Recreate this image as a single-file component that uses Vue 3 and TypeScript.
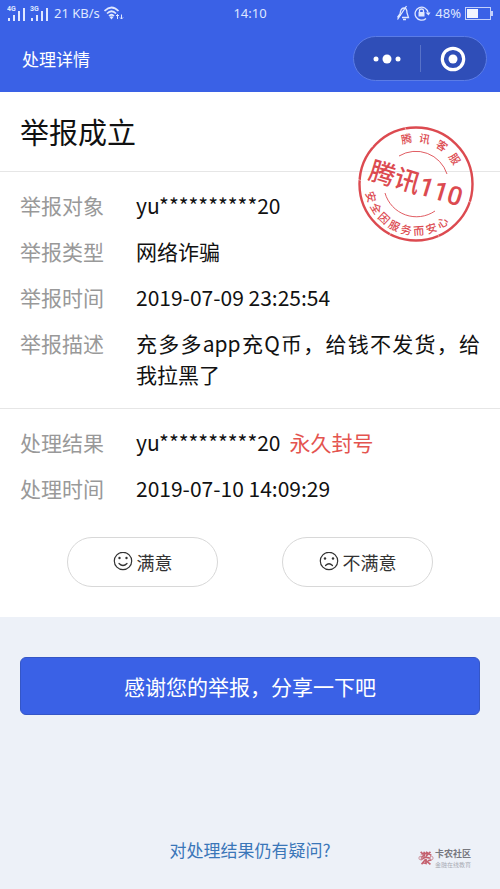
<script setup lang="ts">
import { ref } from 'vue'

interface Row {
  label: string
  value: string
  verdict?: string
}

interface ArcChar {
  char: string
  angle: number
}

const reportRows: Row[] = [
  { label: '举报对象', value: 'yu**********20' },
  { label: '举报类型', value: '网络诈骗' },
  { label: '举报时间', value: '2019-07-09 23:25:54' },
  { label: '举报描述', value: '充多多app充Q币，给钱不发货，给我拉黑了' },
]

const resultRows: Row[] = [
  { label: '处理结果', value: 'yu**********20', verdict: '永久封号' },
  { label: '处理时间', value: '2019-07-10 14:09:29' },
]

// Spreads the characters of a text evenly along a circle, in degrees.
function spread(text: string, start: number, step: number): ArcChar[] {
  return [...text].map((char, i) => ({ char, angle: start + i * step }))
}

const stampTop = spread('腾讯客服', -12, 23)
const stampBottom = spread('安全因服务而安心', 74, -15.5)

const rating = ref<'good' | 'bad' | null>(null)
</script>

<template>
  <div class="page">
    <header class="top">
      <div class="status">
        <div class="status-side">
          <svg class="signal" viewBox="0 0 43 16" aria-hidden="true">
            <g fill="#dfe7ff">
              <text x="0" y="6" class="net">4G</text>
              <rect x="1" y="13" width="2" height="3" />
              <rect x="6" y="10" width="2" height="6" />
              <rect x="11" y="6" width="2" height="10" />
              <rect x="16" y="3" width="2" height="13" />
              <text x="23" y="6" class="net">3G</text>
              <rect x="24" y="13" width="2" height="3" />
              <rect x="29" y="10" width="2" height="6" />
              <rect x="34" y="6" width="2" height="10" />
              <rect x="39" y="3" width="2" height="13" />
            </g>
          </svg>
          <span>21 KB/s</span>
          <svg class="wifi" viewBox="0 0 20 14" aria-hidden="true">
            <g fill="none" stroke="#dfe7ff" stroke-width="1.700">
              <path d="M0.500 5Q7.500-2 14.500 5" />
              <path d="M3 7.500Q7.500 3 12 7.500" />
              <path d="M5 10Q7.500 7.500 10 10" />
            </g>
            <path d="M5.500 11L7.500 13.500 9.500 11Q7.500 9.500 5.500 11Z" fill="#dfe7ff" />
            <path d="M13.500 13V8.500M12 10L13.500 8.500 15 10M17.500 8.500V13M16 11.500L17.500 13 19 11.500" fill="none" stroke="#dfe7ff" />
          </svg>
        </div>
        <span>14:10</span>
        <div class="status-side status-right">
          <svg class="bell" viewBox="0 0 14 16" aria-hidden="true">
            <g fill="none" stroke="#dfe7ff" stroke-width="1.300">
              <path d="M4 11Q4 3 8 3Q11 3 11 8L12.500 12.500H6" />
              <path d="M7 14.500H10M10.500 1L1.500 14.500M1.500 12.500L4 9" />
            </g>
          </svg>
          <svg class="lock" viewBox="0 0 17 16" aria-hidden="true">
            <path d="M12 13.500A6.500 6.500 0 1 1 14 7.500" fill="none" stroke="#dfe7ff" stroke-width="1.300" />
            <path d="M11.500 7.500H16.500L14.500 10.500Z" fill="#dfe7ff" />
            <rect x="4.500" y="7" width="6" height="4.500" fill="#dfe7ff" />
            <path d="M5.500 7V5.500Q5.500 4 7.500 4Q9.500 4 9.500 5.500V7" fill="none" stroke="#dfe7ff" stroke-width="1.300" />
          </svg>
          <span>48%</span>
          <svg class="battery" viewBox="0 0 28 13" aria-hidden="true">
            <rect x="0.500" y="0.500" width="25" height="12" fill="none" stroke="#c3d0fb" />
            <rect x="2" y="2" width="11" height="9" fill="#f2f5ff" />
            <rect x="26" y="4" width="2" height="5" fill="#c3d0fb" />
          </svg>
        </div>
      </div>
      <div class="nav">
        <h1>处理详情</h1>
        <div class="capsule">
          <button type="button" aria-label="更多">
            <svg width="28" height="12" viewBox="0 0 28 12">
              <g fill="#fff">
                <circle cx="3" cy="6" r="2.500" />
                <circle cx="14" cy="6" r="4.500" />
                <circle cx="25" cy="6" r="2.500" />
              </g>
            </svg>
          </button>
          <button type="button" aria-label="关闭">
            <svg width="26" height="26" viewBox="0 0 26 26">
              <circle cx="13" cy="13" r="10.700" fill="none" stroke="#fff" stroke-width="3.200" />
              <circle cx="13" cy="13" r="4.500" fill="#fff" />
            </svg>
          </button>
        </div>
      </div>
    </header>

    <main>
      <section class="card">
        <div class="heading">
          <h2>举报成立</h2>
          <svg class="stamp" viewBox="-60 -60 120 120" role="img" aria-label="腾讯110">
            <g fill="none" stroke="#dc4a50">
              <circle r="56.500" stroke-width="2.400" />
              <g stroke-width="0.900">
                <path d="M-17-28A32.700 32.700 0 0 1 31-10" />
                <path d="M-31 9A32.700 32.700 0 0 0 19 27" />
              </g>
            </g>
            <g fill="#dc4a50" text-anchor="middle">
              <text
                v-for="(c, i) in stampTop"
                :key="'t' + i"
                class="arc"
                :transform="`rotate(${c.angle})`"
                x="0"
                y="-42"
              >{{ c.char }}</text>
              <text
                v-for="(c, i) in stampBottom"
                :key="'b' + i"
                class="arc"
                :transform="`rotate(${c.angle})`"
                x="0"
                y="51"
              >{{ c.char }}</text>
              <text class="brand" transform="rotate(17)" x="0" y="9">腾讯<tspan class="digits">110</tspan></text>
            </g>
            <g stroke="#fff" stroke-width="0.700" opacity="0.700">
              <path d="M-48-35L-43-38M-59-5L-54-3M52 17L58 20M22 51L25 56M-25 49L-28 53M36-47L40-43M-12-59L-10-54" />
            </g>
          </svg>
        </div>

        <dl class="rows">
          <div v-for="row in reportRows" :key="row.label" class="row">
            <dt>{{ row.label }}</dt>
            <dd>{{ row.value }}</dd>
          </div>
        </dl>

        <dl class="rows result">
          <div v-for="row in resultRows" :key="row.label" class="row">
            <dt>{{ row.label }}</dt>
            <dd>{{ row.value }}<span v-if="row.verdict" class="verdict">{{ row.verdict }}</span></dd>
          </div>
        </dl>

        <div class="ratings">
          <button type="button" :aria-pressed="rating === 'good'" @click="rating = 'good'">
            <svg width="20" height="20" viewBox="0 0 20 20" aria-hidden="true">
              <g fill="none" stroke="#333" stroke-width="1.200" stroke-linecap="round">
                <circle cx="10" cy="9" r="8.700" />
                <path d="M6 11.500Q10 15.500 14 11.500" />
              </g>
              <circle cx="6.500" cy="6" r="1.200" fill="#333" />
              <circle cx="13.500" cy="6" r="1.200" fill="#333" />
            </svg>
            <span>满意</span>
          </button>
          <button type="button" :aria-pressed="rating === 'bad'" @click="rating = 'bad'">
            <svg width="20" height="20" viewBox="0 0 20 20" aria-hidden="true">
              <g fill="none" stroke="#333" stroke-width="1.200" stroke-linecap="round">
                <circle cx="10" cy="9" r="8.700" />
                <path d="M6.500 13.500Q10 10 13.500 13.500" />
              </g>
              <circle cx="6" cy="6.500" r="1.200" fill="#333" />
              <circle cx="14" cy="6.500" r="1.200" fill="#333" />
            </svg>
            <span>不满意</span>
          </button>
        </div>
      </section>

      <button type="button" class="share">感谢您的举报，分享一下吧</button>
    </main>

    <footer>
      <a href="#">对处理结果仍有疑问?</a>
      <div class="watermark">
        <svg width="16" height="17" viewBox="0 0 18 17" aria-hidden="true">
          <g fill="none" stroke="#c4606e" stroke-width="1.900">
            <path d="M3 1L6 4M7 1V5L3 7M9 1L15 5M14 1L9 6M3 10L8 7L14 8M4 15L8 10L14 15M9 9V14L5 13M11 11L15 10M3 3H14" />
            <circle cx="3" cy="8" r="2" stroke="#c98a94" stroke-width="1" />
            <circle cx="15" cy="8" r="2" stroke="#c98a94" stroke-width="1" />
          </g>
        </svg>
        <div>
          <strong>卡农社区</strong>
          <small>金融在线教育</small>
        </div>
      </div>
    </footer>
  </div>
</template>

<style>
body {
  margin: 0;
}
</style>

<style scoped>
.page {
  display: flex;
  flex-direction: column;
  min-height: 100vh;
  background: #edf1f8;
  color: #111;
  font-family: "Noto Sans CJK SC", "Noto Sans", sans-serif;
}

h1,
h2,
dl,
dd {
  margin: 0;
  font-weight: 400;
}

button {
  font-family: inherit;
  cursor: pointer;
}

svg {
  display: block;
  flex: none;
}

.top {
  background: #3a61e6;
  color: #fff;
  padding-bottom: 11px;
}

.status {
  display: flex;
  align-items: center;
  padding: 0 7px;
  height: 26px;
  color: #dfe7ff;
  font-family: "Noto Sans", sans-serif;
  font-size: 13px;
}

.status-side {
  display: flex;
  flex: 1;
  align-items: center;
  gap: 4px;
}

.status-right {
  justify-content: flex-end;
}

.signal {
  width: 43px;
  height: 16px;
}

.net {
  font-family: Roboto, sans-serif;
  font-size: 7px;
  font-weight: 700;
}

.wifi {
  width: 20px;
  height: 14px;
}

.bell {
  width: 14px;
  height: 16px;
}

.lock {
  width: 17px;
  height: 16px;
}

.battery {
  width: 28px;
  height: 13px;
}

.nav {
  display: flex;
  align-items: center;
  justify-content: space-between;
  padding: 10px 13px 0 22px;
}

.nav h1 {
  font-size: 17px;
  line-height: 24px;
}

.capsule {
  display: flex;
  box-sizing: border-box;
  width: 134px;
  height: 45px;
  border: 1px solid #5b7ce6;
  border-radius: 23px;
  background: #2f4eb8;
}

.capsule button {
  display: flex;
  flex: 1;
  align-items: center;
  justify-content: center;
  margin: 8px 0;
  padding: 0;
  border: 0;
  background: none;
}

.capsule button + button {
  border-left: 1px solid #5872c8;
}

.card {
  background: #fff;
  padding-bottom: 30px;
}

.heading {
  position: relative;
  padding: 19px 20px 20px;
  border-bottom: 1px solid #e6e6e6;
}

.heading h2 {
  font-size: 29px;
  line-height: 40px;
}

.stamp {
  position: absolute;
  top: 32px;
  right: 24px;
  width: 120px;
  height: 120px;
}

.arc {
  font-size: 11px;
  font-weight: 500;
}

.brand {
  font-size: 26px;
  font-weight: 500;
}

.digits {
  font-family: Roboto, sans-serif;
}

.rows {
  display: flex;
  flex-direction: column;
  gap: 15px;
  padding: 18px 20px;
  font-size: 21px;
  line-height: 31px;
}

.row {
  display: flex;
  gap: 32px;
}

.row dt {
  flex: none;
  color: #999;
}

.row dd {
  flex: 1;
  text-align: justify;
}

.result {
  border-top: 1px solid #e6e6e6;
  padding-bottom: 33px;
}

.verdict {
  margin-left: 9px;
  color: #e4544f;
}

.ratings {
  display: flex;
  justify-content: center;
  gap: 64px;
}

.ratings button {
  display: flex;
  align-items: center;
  justify-content: center;
  gap: 4px;
  box-sizing: border-box;
  width: 151px;
  height: 50px;
  border: 1px solid #d8d8d8;
  border-radius: 25px;
  background: #fff;
  color: #333;
  font-size: 18px;
}

.share {
  display: block;
  width: calc(100% - 40px);
  height: 58px;
  margin: 40px 20px 0;
  border: 1px solid #3556c6;
  border-radius: 6px;
  background: #3a61e6;
  color: #fff;
  font-size: 21px;
}

footer {
  position: relative;
  margin-top: auto;
  padding: 24px 20px 26px;
  text-align: center;
}

footer a {
  color: #3a76b8;
  font-size: 17px;
  line-height: 26px;
  text-decoration: none;
}

.watermark {
  position: absolute;
  right: 29px;
  bottom: 20px;
  display: flex;
  align-items: center;
  gap: 1px;
  text-align: left;
}

.watermark strong,
.watermark small {
  display: block;
}

.watermark strong {
  color: #77787f;
  font-size: 9px;
  line-height: 13px;
}

.watermark small {
  color: #a8abb4;
  font-size: 6px;
  line-height: 9px;
}
</style>
